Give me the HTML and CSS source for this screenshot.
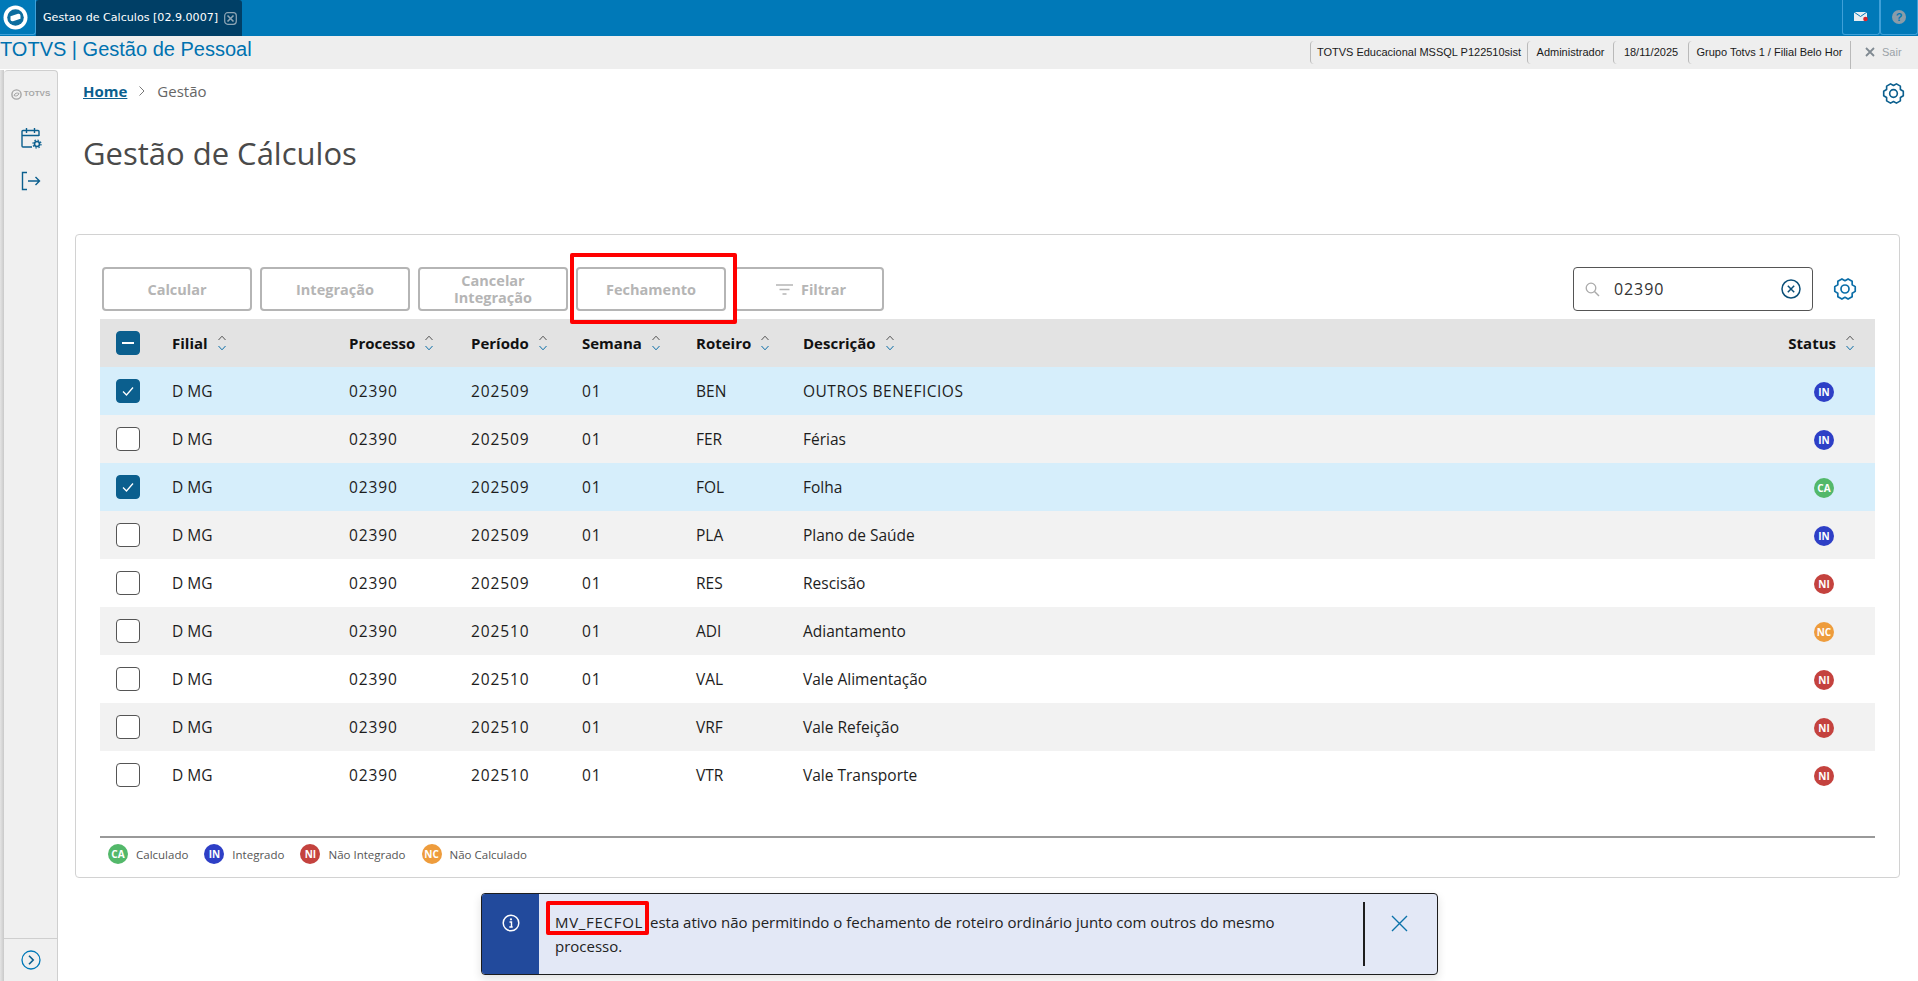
FILE: index.html
```html
<!DOCTYPE html>
<html lang="pt-BR">
<head>
<meta charset="utf-8">
<title>Gestão de Cálculos</title>
<link rel="stylesheet" href="styles.css">
</head>
<body>
<svg class="defs" width="0" height="0" aria-hidden="true">
  <symbol id="sort" viewBox="0 0 10 18">
    <path d="M1.500 6 5 2.200 8.500 6" fill="none" stroke="#555" stroke-width="1"/>
    <path d="M1.500 12 5 15.800 8.500 12" fill="none" stroke="#0b6ea8" stroke-width="1"/>
  </symbol>
  <symbol id="gear" viewBox="0 0 24 24">
    <path d="M22.230 9.640 22.230 14.360 19.190 16.150 19.160 19.680 15.070 22.040 12 20.300 8.930 22.040 4.840 19.680 4.810 16.150 1.770 14.360 1.770 9.640 4.810 7.850 4.840 4.320 8.930 1.960 12 3.700 15.070 1.960 19.160 4.320 19.190 7.850Z" fill="none" stroke="currentColor" stroke-width="1.700" stroke-linejoin="round"/>
    <circle cx="12" cy="12" r="4" fill="none" stroke="currentColor" stroke-width="1.700"/>
  </symbol>
</svg>
<div class="app">
  <header class="topbar">
    <div class="logo-tile">
      <svg width="25" height="25" viewBox="0 0 25 25"><circle cx="12.500" cy="12.500" r="12" fill="#fff"/><circle cx="12.500" cy="12.500" r="8.300" fill="#0d6d9f"/><path d="M7.500 11.200 15 8.800Q17.500 8.300 17.500 10.800V13.800L10 16.200Q7.500 16.700 7.500 14.200Z" fill="#fff"/></svg>
    </div>
    <div class="tab">
      <span>Gestao de Calculos [02.9.0007]</span>
      <svg class="tab-x" width="13" height="13" viewBox="0 0 13 13"><rect x=".7" y=".7" width="11.600" height="11.600" rx="3" fill="none" stroke="#8fa6b5" stroke-width="1.200"/><path d="M3.500 3.500l6 6M9.500 3.500l-6 6" stroke="#8fa6b5" stroke-width="1.600"/></svg>
    </div>
    <div class="top-actions">
      <div class="top-btn">
        <svg width="15" height="12" viewBox="0 0 15 12"><rect y="1" width="13" height="9" fill="#e8eef2"/><path d="M0 1l6.500 4.500L13 1" fill="none" stroke="#0079b8" stroke-width="1"/><circle cx="11.500" cy="8" r="2.300" fill="#d8232a"/></svg>
      </div>
      <div class="top-btn">
        <svg width="14" height="14" viewBox="0 0 14 14"><circle cx="7" cy="7" r="7" fill="#8b9ca8"/></svg>
        <span class="help-q">?</span>
      </div>
    </div>
  </header>
  <div class="subbar">
    <div class="app-name">TOTVS | Gestão de Pessoal</div>
    <div class="info">
      <span class="info-cell info-db">TOTVS Educacional MSSQL P122510sist</span>
      <span class="info-cell info-user">Administrador</span>
      <span class="info-cell info-date">18/11/2025</span>
      <span class="info-cell info-group">Grupo Totvs 1 / Filial Belo Hor</span>
      <span class="info-cell info-exit"><svg width="10" height="10" viewBox="0 0 10 10"><path d="M1 1l8 8M9 1l-8 8" stroke="#808a92" stroke-width="1.800"/></svg><em>Sair</em></span>
    </div>
  </div>
  <div class="workspace">
    <div class="edge"></div>
    <aside class="sidebar">
      <div class="side-top">
        <div class="brand">
          <svg width="11" height="11" viewBox="0 0 11 11"><circle cx="5.500" cy="5.500" r="4.600" fill="none" stroke="#a5a5a5" stroke-width="1.400"/><path d="M3 6.500C4 4 6 3.500 8 4.500M8 4.500C7 7 5 7.500 3 6.500" fill="none" stroke="#a5a5a5" stroke-width="1"/></svg>
          <span>TOTVS</span>
        </div>
        <svg class="side-ico" width="22" height="22" viewBox="0 0 22 22"><path d="M19 9V4.500a1 1 0 0 0-1-1H3a1 1 0 0 0-1 1V19a1 1 0 0 0 1 1h9M2 8.500h17M6.500 1v5M14.500 1v5" fill="none" stroke="#0b5f8e" stroke-width="1.400"/><circle cx="17" cy="17" r="2.500" fill="none" stroke="#0b5f8e" stroke-width="1.600"/><circle cx="17" cy="17" r="4" fill="none" stroke="#0b5f8e" stroke-width="1.200" stroke-dasharray="1.500 1.640"/></svg>
        <svg class="side-ico" width="20" height="20" viewBox="0 0 20 20"><path d="M6 1.500H1.500v17H6M7 10h11.500M14.500 6l4 4-4 4" fill="none" stroke="#0b5f8e" stroke-width="1.400"/></svg>
      </div>
      <div class="side-foot">
        <svg width="20" height="20" viewBox="0 0 20 20"><circle cx="10" cy="10" r="9" fill="none" stroke="#0079b8" stroke-width="1.300"/><path d="M8 5.800 12.200 10 8 14.200" fill="none" stroke="#0b5f8e" stroke-width="1.600"/></svg>
      </div>
    </aside>
    <main class="main">
      <div class="page-head">
        <nav class="crumbs"><a class="crumb-home">Home</a><svg width="8" height="12" viewBox="0 0 8 12"><path d="M1.500 1.500 6 6l-4.500 4.500" fill="none" stroke="#777" stroke-width="1"/></svg><span>Gestão</span></nav>
        <svg class="page-gear" width="23" height="23"><use href="#gear"/></svg>
      </div>
      <h1 class="title">Gestão de Cálculos</h1>
      <section class="card">
        <div class="toolbar">
          <button class="btn">Calcular</button>
          <button class="btn">Integração</button>
          <button class="btn btn-two">Cancelar Integração</button>
          <button class="btn">Fechamento</button>
          <button class="btn btn-filter"><svg width="17" height="11" viewBox="0 0 17 11"><path d="M0 1h17M3.500 5.500h10M6.500 10h4" stroke="#b5b5b5" stroke-width="1.500"/></svg>Filtrar</button>
          <div class="search">
            <svg width="15" height="15" viewBox="0 0 15 15"><circle cx="6" cy="6" r="4.800" fill="none" stroke="#aaa" stroke-width="1.300"/><path d="M9.500 9.500 14 14" stroke="#aaa" stroke-width="1.400"/></svg>
            <span class="search-val">02390</span>
            <svg class="search-clear" width="20" height="20" viewBox="0 0 20 20"><circle cx="10" cy="10" r="9" fill="none" stroke="#0b4f78" stroke-width="1.500"/><path d="M6.800 6.800l6.400 6.400M13.200 6.800l-6.400 6.400" stroke="#0b4f78" stroke-width="1.500"/></svg>
          </div>
          <svg class="tool-gear" width="24" height="24"><use href="#gear"/></svg>
        </div>
        <div class="table">
          <div class="row head">
            <div class="c-check"><span class="box on"><svg width="14" height="14" viewBox="0 0 14 14"><path d="M1 7h12" stroke="#fff" stroke-width="2"/></svg></span></div>
            <div class="th">Filial<svg class="s" width="10" height="18"><use href="#sort"/></svg></div>
            <div class="th">Processo<svg class="s" width="10" height="18"><use href="#sort"/></svg></div>
            <div class="th">Período<svg class="s" width="10" height="18"><use href="#sort"/></svg></div>
            <div class="th">Semana<svg class="s" width="10" height="18"><use href="#sort"/></svg></div>
            <div class="th">Roteiro<svg class="s" width="10" height="18"><use href="#sort"/></svg></div>
            <div class="th">Descrição<svg class="s" width="10" height="18"><use href="#sort"/></svg></div>
            <div class="th th-status">Status<svg class="s" width="10" height="18"><use href="#sort"/></svg></div>
          </div>
          <div class="row sel">
            <div class="c-check"><span class="box on"><svg width="14" height="14" viewBox="0 0 14 14"><path d="M2 7.500 5.500 11 12 3.500" fill="none" stroke="#fff" stroke-width="1.300"/></svg></span></div>
            <div>D MG</div><div>02390</div><div>202509</div><div>01</div><div>BEN</div><div class="caps">OUTROS BENEFICIOS</div><div class="c-status"><span class="badge in">IN</span></div>
          </div>
          <div class="row alt">
            <div class="c-check"><span class="box"></span></div>
            <div>D MG</div><div>02390</div><div>202509</div><div>01</div><div>FER</div><div>Férias</div><div class="c-status"><span class="badge in">IN</span></div>
          </div>
          <div class="row sel">
            <div class="c-check"><span class="box on"><svg width="14" height="14" viewBox="0 0 14 14"><path d="M2 7.500 5.500 11 12 3.500" fill="none" stroke="#fff" stroke-width="1.300"/></svg></span></div>
            <div>D MG</div><div>02390</div><div>202509</div><div>01</div><div>FOL</div><div>Folha</div><div class="c-status"><span class="badge ca">CA</span></div>
          </div>
          <div class="row alt">
            <div class="c-check"><span class="box"></span></div>
            <div>D MG</div><div>02390</div><div>202509</div><div>01</div><div>PLA</div><div>Plano de Saúde</div><div class="c-status"><span class="badge in">IN</span></div>
          </div>
          <div class="row">
            <div class="c-check"><span class="box"></span></div>
            <div>D MG</div><div>02390</div><div>202509</div><div>01</div><div>RES</div><div>Rescisão</div><div class="c-status"><span class="badge ni">NI</span></div>
          </div>
          <div class="row alt">
            <div class="c-check"><span class="box"></span></div>
            <div>D MG</div><div>02390</div><div>202510</div><div>01</div><div>ADI</div><div>Adiantamento</div><div class="c-status"><span class="badge nc">NC</span></div>
          </div>
          <div class="row">
            <div class="c-check"><span class="box"></span></div>
            <div>D MG</div><div>02390</div><div>202510</div><div>01</div><div>VAL</div><div>Vale Alimentação</div><div class="c-status"><span class="badge ni">NI</span></div>
          </div>
          <div class="row alt">
            <div class="c-check"><span class="box"></span></div>
            <div>D MG</div><div>02390</div><div>202510</div><div>01</div><div>VRF</div><div>Vale Refeição</div><div class="c-status"><span class="badge ni">NI</span></div>
          </div>
          <div class="row">
            <div class="c-check"><span class="box"></span></div>
            <div>D MG</div><div>02390</div><div>202510</div><div>01</div><div>VTR</div><div>Vale Transporte</div><div class="c-status"><span class="badge ni">NI</span></div>
          </div>
        </div>
        <div class="legend">
          <span class="leg"><span class="badge ca">CA</span>Calculado</span>
          <span class="leg"><span class="badge in">IN</span>Integrado</span>
          <span class="leg"><span class="badge ni">NI</span>Não Integrado</span>
          <span class="leg"><span class="badge nc">NC</span>Não Calculado</span>
        </div>
      </section>
    </main>
  </div>
</div>
<div class="mark mark-btn"></div>
<div class="toast">
  <div class="toast-ico"><svg width="18" height="18" viewBox="0 0 18 18"><circle cx="9" cy="9" r="7.800" fill="none" stroke="#fff" stroke-width="1.500"/><circle cx="9" cy="5.300" r="1.100" fill="#fff"/><path d="M7.500 8h2v5M7.300 13h3.400" fill="none" stroke="#fff" stroke-width="1.400"/></svg></div>
  <div class="toast-msg"><span class="param">MV_FECFOL</span> esta ativo não permitindo o fechamento de roteiro ordinário junto com outros do mesmo processo.</div>
  <div class="toast-close"><svg width="17" height="17" viewBox="0 0 17 17"><path d="M1 1l15 15M16 1 1 16" stroke="#0b72aa" stroke-width="1.400"/></svg></div>
</div>
<div class="mark mark-toast"></div>
</body>
</html>
```
FILE: styles.css
```css
* { box-sizing: border-box; }
html, body { margin: 0; height: 100%; overflow: hidden; background: #fff; }
body { font-family: "Open Sans", "Liberation Sans", sans-serif; color: #1d1d1d; }
.defs { position: absolute; }
.app { display: flex; flex-direction: column; height: 981px; }

.topbar { display: flex; height: 36px; background: #0079b8; flex: none; }
.logo-tile { width: 36px; height: 35px; display: flex; align-items: center; justify-content: center; padding-right: 4px; background: #0079b8; border-right: 1px solid #3fa0d8; border-bottom: 1px solid #3fa0d8; border-radius: 0 0 3px 0; }
.tab { width: 206px; display: flex; align-items: center; background: #003f66; border-radius: 3px 3px 0 0; padding-left: 7px; gap: 6px; font: 11.100px/1 "DejaVu Sans", sans-serif; color: #fff; white-space: nowrap; }
.top-actions { margin-left: auto; display: flex; }
.top-btn { width: 38px; height: 35px; display: flex; align-items: center; justify-content: center; border: 1px solid #3fa0d8; border-top: 0; border-radius: 0 0 3px 3px; position: relative; }
.help-q { position: absolute; font: bold 11px/14px "Liberation Sans", sans-serif; color: #0079b8; left: 0; right: 0; top: 10px; text-align: center; }

.subbar { display: flex; height: 33px; flex: none; background: #eee; justify-content: space-between; align-items: flex-start; }
.app-name { font: 20px/26px "Liberation Sans", sans-serif; color: #0072b0; }
.info { display: flex; height: 33px; align-items: flex-start; padding-top: 5px; font: 11px/22px "Liberation Sans", sans-serif; color: #1a1a1a; white-space: nowrap; }
.info-cell { display: block; height: 23px; border-left: 1px solid #b9b9b9; border-radius: 4px 0 0 4px; text-align: center; }
.info-db { width: 217px; }
.info-user { width: 86px; }
.info-date { width: 75px; }
.info-group { width: 162px; }
.info-exit { width: 68px; height: 28px; display: flex; align-items: flex-start; padding: 6px 0 0 14px; gap: 7px; line-height: 11px; border-radius: 0; }
.info-exit em { font-style: normal; color: #9aa2a8; }

.workspace { flex: 1; display: flex; min-height: 0; padding-top: 1px; }
.edge { width: 4px; background: linear-gradient(90deg, #e4e4e4, #c9c9c9); flex: none; }
.sidebar { width: 54px; flex: none; background: #f0f0f0; border: 1px solid #cfcfcf; border-width: 1px 1px 0 0; border-radius: 4px 4px 0 0; display: flex; flex-direction: column; justify-content: space-between; }
.side-top { display: flex; flex-direction: column; align-items: center; }
.brand { height: 14px; margin-top: 16px; display: flex; align-items: center; gap: 2px; font: bold 8px/1 "Liberation Sans", sans-serif; color: #a5a5a5; }
.brand + .side-ico { margin-top: 26px; }
.side-ico + .side-ico { margin-top: 22px; }
.side-foot { height: 43px; border-top: 1px solid #cfcfcf; display: flex; align-items: center; justify-content: center; }

.main { flex: 1; min-width: 0; padding: 0 18px 0 17px; }
.page-head { display: flex; justify-content: space-between; align-items: center; height: 44px; padding: 0 0 2px 8px; }
.crumbs { display: flex; align-items: center; gap: 11px; font-size: 15px; color: #666; }
.crumb-home { color: #0b5f8e; font-weight: 700; text-decoration: underline; }
.page-gear { color: #0b5f8e; margin: 4px -5px 0 0; }
.title { margin: 0; height: 120px; padding: 16px 0 0 8px; font-weight: 400; font-size: 31px; line-height: 46px; color: #4a4a4a; }

.card { height: 644px; border: 1px solid #d2d2d2; border-radius: 4px; padding: 32px 24px 0; }
.toolbar { display: flex; align-items: center; gap: 8px; height: 44px; padding-left: 2px; }
.btn { width: 150px; height: 44px; border: 2px solid #b5b5b5; border-radius: 4px; background: #fff; color: #b5b5b5; font: 700 14.500px/17px "Open Sans", sans-serif; padding: 0 20px; display: flex; align-items: center; justify-content: center; gap: 8px; text-align: center; }
.btn-two { padding: 0 30px; }
.btn-filter { padding-left: 24px; }
.search { margin-left: auto; width: 240px; height: 44px; border: 1px solid #555; border-radius: 4px; display: flex; align-items: center; padding: 0 11px; gap: 14px; background: #fff; }
.search-val { font-size: 16px; letter-spacing: .9px; color: #333; }
.search-clear { margin-left: auto; }
.tool-gear { color: #0b6ea8; margin: 0 18px 0 12px; flex: none; }

.table { margin-top: 8px; }
.row { display: grid; grid-template-columns: 72px 177px 122px 111px 114px 107px 1fr 200px; align-items: center; height: 48px; font-size: 15.500px; background: #fff; }
.row > :nth-child(3), .row > :nth-child(4), .row > :nth-child(5) { letter-spacing: .9px; }
.row .caps { letter-spacing: .5px; }
.row.head { background: #e3e3e3; font-weight: 700; font-size: 15px; color: #111; }
.row.head > * { letter-spacing: 0; }
.row.alt { background: #f2f2f2; }
.row.sel { background: #d6eefb; }
.c-check { padding-left: 16px; display: flex; }
.box { width: 24px; height: 24px; border: 1px solid #555; border-radius: 4px; background: #fff; display: flex; align-items: center; justify-content: center; }
.box.on { background: #0b5f8e; border-color: #0b5f8e; }
.th { display: flex; align-items: center; gap: 9px; }
.s { flex: none; }
.th-status { justify-content: flex-end; padding-right: 20px; gap: 9px; }
.c-status { display: flex; justify-content: flex-end; padding: 2px 41px 0 0; }
.badge { width: 20px; height: 20px; border-radius: 50%; display: inline-flex; align-items: center; justify-content: center; color: #fff; font-size: 10px; font-weight: 700; flex: none; }
.in { background: #2e3fc6; }
.ca { background: #53b86a; }
.ni { background: #c4423e; }
.nc { background: #ee9c3c; }

.legend { margin-top: 37px; border-top: 2px solid #999; display: flex; padding: 6px 0 0 8px; gap: 16px; }
.leg { display: flex; align-items: center; gap: 8px; font-size: 11.500px; color: #555; }

.mark { position: absolute; border: 4px solid #f00; border-radius: 2px; }
.mark-btn { left: 570px; top: 253px; width: 167px; height: 71px; }
.mark-toast { left: 546px; top: 901px; width: 103px; height: 34px; }
.toast { position: absolute; left: 481px; top: 893px; width: 957px; height: 82px; display: flex; background: #e3e8f6; border: 1px solid #1d1d1d; border-radius: 4px; box-shadow: 0 4px 10px rgba(0,0,0,.12); overflow: hidden; }
.toast-ico { width: 57px; flex: none; background: #224a9c; display: flex; justify-content: center; padding-top: 20px; }
.toast-msg { width: 824px; flex: none; padding: 16px 60px 0 16px; font-size: 15px; line-height: 24px; color: #222; }
.param { letter-spacing: .7px; margin-right: 3px; }
.toast-close { flex: none; width: 70px; margin: 8px 0; border-left: 2px solid #1d1d1d; display: flex; justify-content: center; padding-top: 13px; }
```
